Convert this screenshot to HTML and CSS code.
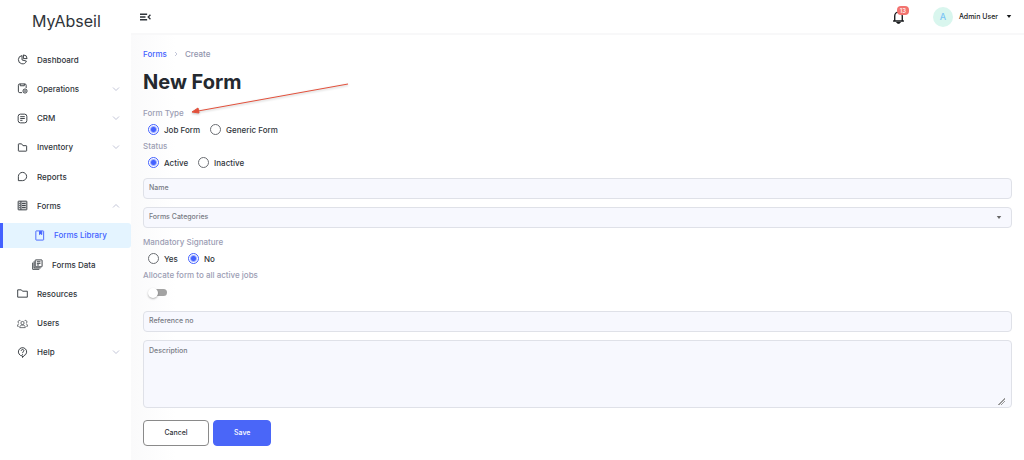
FILE: index.html
```html
<!DOCTYPE html>
<html lang="en">
<head>
    <meta charset="UTF-8">
    <meta name="viewport" content="width=device-width, initial-scale=1.0">
    <title>MyAbseil - New Form</title>
    <link rel="stylesheet" href="styles.css">
</head>
<body>
    <!-- Sidebar -->
    <aside class="sidebar">
        <div class="logo">MyAbseil</div>
        <nav class="nav">
            <a class="nav-item" href="#">
                <svg class="icon" viewBox="0 0 24 24"><path d="M11 3.500a9 9 0 1 0 9.500 12L11 13z"/><path d="M14 2v8h8a8 8 0 0 0-8-8z"/></svg>
                <span>Dashboard</span>
            </a>
            <a class="nav-item" href="#">
                <svg class="icon" viewBox="0 0 24 24"><path d="M11 21H6a3 3 0 0 1-3-3V5a3 3 0 0 1 3-3h11a3 3 0 0 1 3 3v6"/><path d="M7 2v4h9V2"/><circle cx="17.500" cy="17.500" r="4.500"/><circle cx="17.500" cy="17.500" r="1"/></svg>
                <span>Operations</span>
                <svg class="chevron" viewBox="0 0 8 8"><path d="M1 2.500l3 3 3-3"/></svg>
            </a>
            <a class="nav-item" href="#">
                <svg class="icon" viewBox="0 0 24 24"><rect x="2.500" y="2.500" width="19" height="19" rx="5"/><path d="M7 8h10M7 12h10M7 16h5"/></svg>
                <span>CRM</span>
                <svg class="chevron" viewBox="0 0 8 8"><path d="M1 2.500l3 3 3-3"/></svg>
            </a>
            <a class="nav-item" href="#">
                <svg class="icon" viewBox="0 0 24 24"><path d="M3 19V5q0-1 1-1h6l3 4h7q1 0 1 1v10q0 1-1 1H4q-1 0-1-1z"/></svg>
                <span>Inventory</span>
                <svg class="chevron" viewBox="0 0 8 8"><path d="M1 2.500l3 3 3-3"/></svg>
            </a>
            <a class="nav-item" href="#">
                <svg class="icon" viewBox="0 0 24 24"><path d="M3 21v-9a9 9 0 1 1 9 9z"/></svg>
                <span>Reports</span>
            </a>
            <a class="nav-item" href="#">
                <svg class="icon" viewBox="0 0 24 24"><rect class="tint" x="2.500" y="2.500" width="19" height="19" rx="1"/><path d="M8.500 3v18M5 7.500h2M5 12h2M5 16.500h2M11 7.500h8M11 12h8M11 16.500h8"/></svg>
                <span>Forms</span>
                <svg class="chevron" viewBox="0 0 8 8"><path d="M1 5.500l3-3 3 3"/></svg>
            </a>
            <a class="nav-item sub active" href="#">
                <svg class="icon" viewBox="0 0 24 24"><rect x="4" y="2" width="17" height="20" rx="1"/><path class="solid" d="M12 3h5v7l-2.500-2-2.500 2z"/></svg>
                <span>Forms Library</span>
            </a>
            <a class="nav-item sub" href="#">
                <svg class="icon" viewBox="0 0 24 24"><rect x="7" y="2" width="15" height="15" rx="1"/><path d="M4.500 5v14.500H19M1.500 8v14.500H16M10.500 6h8M10.500 9.500h8M10.500 13h5"/></svg>
                <span>Forms Data</span>
            </a>
            <a class="nav-item" href="#">
                <svg class="icon" viewBox="0 0 24 24"><path d="M1.500 20V4h8l2.500 3H22.500v13z"/></svg>
                <span>Resources</span>
            </a>
            <a class="nav-item" href="#">
                <svg class="icon thin" viewBox="0 0 24 24"><circle cx="12" cy="11" r="3.500"/><path d="M6 21c0-4 2-5.500 6-5.500s6 1.500 6 5.500z"/><path d="M8 7a3 3 0 1 0-4 4M16 7a3 3 0 1 1 4 4M4.500 13C2 13 1 14.500 1 18h3M19.500 13c2.500 0 3.500 1.500 3.500 5h-3"/></svg>
                <span>Users</span>
            </a>
            <a class="nav-item" href="#">
                <svg class="icon" viewBox="0 0 24 24"><path d="M12 23v-3.500a9 9 0 1 1 3-.5c-.5 1.500-1.500 3-3 4z"/><path d="M9 8.500c0-4 6-4 6-.5 0 2.500-3 2.500-3 5M12 15v2"/></svg>
                <span>Help</span>
                <svg class="chevron" viewBox="0 0 8 8"><path d="M1 2.500l3 3 3-3"/></svg>
            </a>
        </nav>
    </aside>

    <div class="page">
        <!-- Top bar -->
        <header class="topbar">
            <button class="menu-button" aria-label="Toggle menu">
                <svg viewBox="0 0 20 14"><path d="M0 2h13M0 7h10M0 12h13M19 3l-4 4 4 4"/></svg>
            </button>
            <div class="account">
                <button class="bell" aria-label="Notifications">
                    <svg viewBox="0 0 24 26"><path d="M2 20.500h20M5 20v-9a7 7 0 0 1 14 0v9M12 5V2"/><path class="solid" d="M10 23.500h4l-1 1h-2z"/></svg>
                    <span class="badge">13</span>
                </button>
                <span class="avatar">A</span>
                <button class="user-button">Admin User
                    <svg class="caret" viewBox="0 0 6 4"><path d="M0 0h6L3 4z"/></svg>
                </button>
            </div>
        </header>

        <!-- New form -->
        <main class="content">
            <div class="breadcrumb">
                <a href="#">Forms</a>
                <svg viewBox="0 0 4 6"><path d="M1 1l2 2-2 2"/></svg>
                <span>Create</span>
            </div>
            <h1>New Form</h1>

            <form>
                <fieldset class="choice">
                    <legend>Form Type</legend>
                    <div class="options">
                        <label><input type="radio" name="type" checked>Job Form</label>
                        <label><input type="radio" name="type">Generic Form</label>
                    </div>
                </fieldset>
                <fieldset class="choice">
                    <legend>Status</legend>
                    <div class="options">
                        <label><input type="radio" name="status" checked>Active</label>
                        <label><input type="radio" name="status">Inactive</label>
                    </div>
                </fieldset>

                <div class="fields">
                    <input class="field" type="text" placeholder="Name" aria-label="Name">
                    <div class="select-wrap">
                        <select class="field" aria-label="Forms Categories">
                            <option>Forms Categories</option>
                        </select>
                        <svg class="caret" viewBox="0 0 6 4"><path d="M0 0h6L3 4z"/></svg>
                    </div>
                </div>

                <fieldset class="choice">
                    <legend>Mandatory Signature</legend>
                    <div class="options">
                        <label><input type="radio" name="signature">Yes</label>
                        <label><input type="radio" name="signature" checked>No</label>
                    </div>
                </fieldset>
                <div class="choice">
                    <label class="switch-label" for="allocate">Allocate form to all active jobs</label>
                    <div class="options switch-row">
                        <input class="switch" type="checkbox" id="allocate">
                    </div>
                </div>

                <div class="fields">
                    <input class="field" type="text" placeholder="Reference no" aria-label="Reference no">
                    <textarea class="field" placeholder="Description" aria-label="Description"></textarea>
                </div>

                <div class="actions">
                    <button class="button cancel" type="button">Cancel</button>
                    <button class="button save" type="button">Save</button>
                </div>
            </form>

            <!-- Pointer to the form type -->
            <svg class="arrow" viewBox="0 0 160 34"><path d="M157 2L7 29"/><path class="head" d="M1 30l6-4 1 5z"/></svg>
        </main>
    </div>
</body>
</html>
```

FILE: styles.css
```css
* {
    box-sizing: border-box;
}

body {
    margin: 0;
    min-height: 100vh;
    display: flex;
    background: white;
    color: #2f343a;
    font-family: 'Inter', sans-serif;
    font-size: 8px;
    font-weight: 500;
    line-height: 12px;
}

button, input, select, textarea {
    font: inherit;
    color: inherit;
    margin: 0;
}

button {
    padding: 0;
    border: none;
    background: none;
    cursor: pointer;
}

a {
    color: inherit;
    text-decoration: none;
}

svg {
    display: block;
    flex: none;
    fill: none;
    stroke: currentColor;
}

.solid {
    fill: currentColor;
}

.tint {
    fill: #d5d6d8;
}

/* Sidebar */
.sidebar {
    width: 131px;
    flex: none;
}

.logo {
    padding: 9px 0 14px 32px;
    font-size: 16px;
    font-weight: 400;
    line-height: 24px;
}

.nav {
    height: 318px;
    display: flex;
    flex-direction: column;
    justify-content: space-between;
}

.nav-item {
    height: 25px;
    display: flex;
    align-items: center;
    gap: 9px;
    padding: 0 11px 0 17px;
}

.nav-item.sub {
    padding-left: 32px;
}

.nav-item.active {
    padding-left: 31px;
    border-left: 3px solid #4361ff;
    border-radius: 0 3px 3px 0;
    background: #e4f4ff;
    color: #4361ff;
}

.icon {
    width: 11px;
    height: 11px;
    stroke-width: 2;
}

.icon.thin {
    stroke-width: 1.5;
}

.chevron {
    width: 8px;
    height: 8px;
    margin-left: auto;
    color: #c3c6d8;
    stroke-width: 1;
}

/* Top bar */
.page {
    flex: 1;
    min-width: 0;
}

.topbar {
    height: 35px;
    display: flex;
    align-items: center;
    justify-content: space-between;
    padding: 0 12px 0 9px;
    border-bottom: 2px solid #f8f8f9;
}

.menu-button svg {
    width: 11px;
    height: 8px;
    stroke-width: 2.5;
}

.account {
    display: flex;
    align-items: center;
    color: #16181b;
    font-size: 7px;
}

.bell {
    position: relative;
    margin-right: 28px;
}

.bell svg {
    width: 13px;
    height: 14px;
    stroke-width: 2.5;
}

.badge {
    position: absolute;
    top: -4px;
    right: -4px;
    padding: 0 3px;
    border-radius: 4px;
    background: #f2736f;
    color: white;
    font-size: 6px;
    line-height: 9px;
}

.avatar {
    width: 20px;
    height: 20px;
    margin-right: 6px;
    border-radius: 50%;
    background: #d9f6ee;
    color: #7cc5f5;
    font-size: 9px;
    line-height: 20px;
    text-align: center;
}

.user-button {
    display: flex;
    align-items: center;
    gap: 8px;
}

.caret {
    width: 6px;
    height: 3px;
    fill: currentColor;
    stroke: none;
}

/* Content */
.content {
    position: relative;
    padding: 13px 12px 14px;
    background: linear-gradient(to right, #fafafb, white 45px);
}

.breadcrumb {
    display: flex;
    align-items: center;
    gap: 7px;
    color: #9295ad;
}

.breadcrumb a {
    color: #4361ff;
}

.breadcrumb svg {
    width: 4px;
    height: 6px;
    color: #c3c6d8;
}

h1 {
    margin: 8px 0 11px;
    color: #24292f;
    font-size: 20px;
    font-weight: 700;
    line-height: 28px;
}

.choice {
    margin: 0;
    padding: 0;
    border: none;
}

.choice legend,
.switch-label {
    display: block;
    padding: 0;
    color: #9b9db3;
}

.options {
    height: 21px;
    display: flex;
    align-items: center;
    gap: 10px;
    padding-left: 5px;
}

.options label {
    display: flex;
    align-items: center;
    gap: 5px;
}

input[type="radio"] {
    appearance: none;
    width: 11px;
    height: 11px;
    border: 1px solid #6b6e73;
    border-radius: 50%;
    background: white;
}

input[type="radio"]:checked {
    border-color: #4361ff;
    background: radial-gradient(circle, #4361ff 2px, white 4px);
}

.switch-row {
    height: 25px;
    padding: 0 0 2px 8px;
}

.switch {
    appearance: none;
    width: 16px;
    height: 7px;
    display: flex;
    align-items: center;
    border-radius: 4px;
    background: #a3a3a3;
}

.switch::before {
    content: "";
    width: 10px;
    height: 10px;
    flex: none;
    margin-left: -3px;
    border-radius: 50%;
    background: white;
    box-shadow: 0 1px 2px rgba(0, 0, 0, 0.3);
}

.switch:checked {
    justify-content: flex-end;
}

/* Fields */
.fields {
    display: grid;
    gap: 8px;
    padding: 5px 0 8px;
}

.field {
    display: block;
    width: 100%;
    height: 21px;
    padding: 0 5px 2px;
    border: 1px solid #dfe1e8;
    border-radius: 4px;
    background: #f7f8fe;
    color: #777b84;
    font-size: 7px;
}

.field::placeholder {
    color: #777b84;
}

select.field {
    appearance: none;
}

textarea.field {
    height: 68px;
    padding: 4px 5px;
}

textarea.field::-webkit-resizer {
    background: linear-gradient(135deg, transparent 50%, #999 50%, #999 58%, transparent 58%, transparent 70%, #999 70%, #999 78%, transparent 78%) 2px 6px / 7px 7px no-repeat;
}

.select-wrap {
    position: relative;
}

.select-wrap .caret {
    position: absolute;
    top: 9px;
    right: 10px;
    color: #666;
    pointer-events: none;
}

/* Buttons */
.actions {
    display: flex;
    gap: 4px;
    padding-top: 4px;
}

.button {
    min-width: 58px;
    height: 26px;
    padding: 0 20px;
    border: 1px solid #8a8a8a;
    border-radius: 4px;
    background: white;
    font-size: 7px;
}

.button.cancel {
    min-width: 66px;
}

.button.save {
    border-color: #4a66f8;
    background: #4a66f8;
    color: white;
}

/* Arrow */
.arrow {
    position: absolute;
    top: 47px;
    left: 60px;
    width: 160px;
    height: 34px;
    color: #e2503b;
    filter: drop-shadow(0 1px 1px rgba(0, 0, 0, 0.25));
    pointer-events: none;
}

.arrow .head {
    fill: currentColor;
}
```
